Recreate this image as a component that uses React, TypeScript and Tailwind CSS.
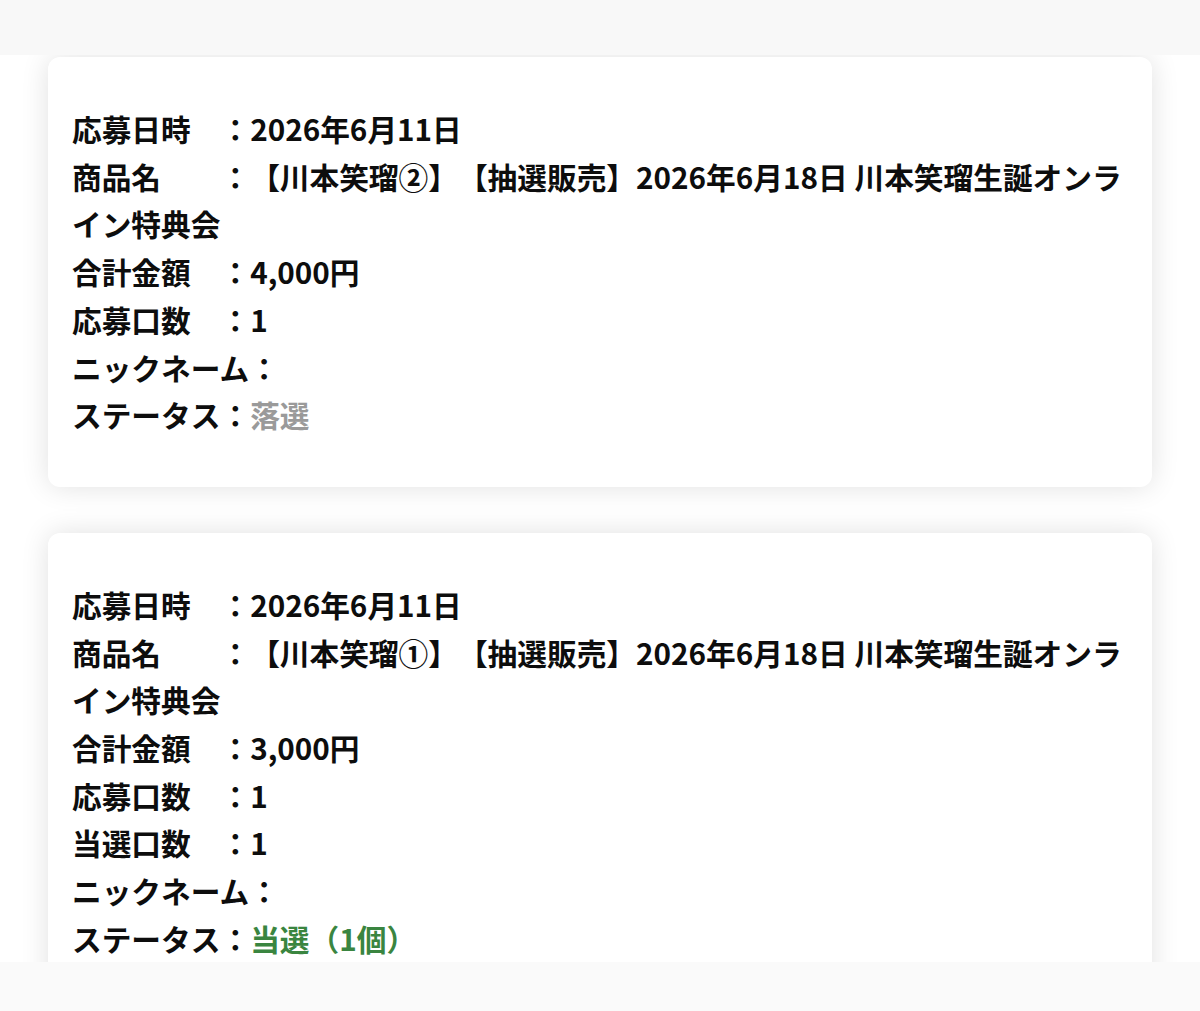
import React from "react";

interface Row {
  label: string;
  value: string;
  tone?: "lost" | "won";
}

const entries: Row[][] = [
  [
    { label: "応募日時　：", value: "2026年6月11日" },
    {
      label: "商品名　　：",
      value: "【川本笑瑠②】【抽選販売】2026年6月18日 川本笑瑠生誕オンライン特典会",
    },
    { label: "合計金額　：", value: "4,000円" },
    { label: "応募口数　：", value: "1" },
    { label: "ニックネーム：", value: "" },
    { label: "ステータス：", value: "落選", tone: "lost" },
  ],
  [
    { label: "応募日時　：", value: "2026年6月11日" },
    {
      label: "商品名　　：",
      value: "【川本笑瑠①】【抽選販売】2026年6月18日 川本笑瑠生誕オンライン特典会",
    },
    { label: "合計金額　：", value: "3,000円" },
    { label: "応募口数　：", value: "1" },
    { label: "当選口数　：", value: "1" },
    { label: "ニックネーム：", value: "" },
    { label: "ステータス：", value: "当選（1個）", tone: "won" },
  ],
];

function EntryCard({ rows }: { rows: Row[] }) {
  return (
    <div className="rounded-[12px] bg-white px-6 pt-[48px] pb-[48px] shadow-[0_0_28px_rgba(0,0,0,0.12)]">
      {rows.map((row, i) => (
        <p
          key={i}
          className="text-[29.7px] leading-[47.7px] font-bold text-[#0d0d0d] [text-spacing-trim:space-all]"
        >
          {row.label}
          <span
            className={
              row.tone === "lost"
                ? "text-[#9a9a9a]"
                : row.tone === "won"
                ? "text-[#3a8540]"
                : ""
            }
          >
            {row.value}
          </span>
        </p>
      ))}
    </div>
  );
}

export default function App() {
  return (
    <div
      className="min-h-screen bg-white"
      style={{ fontFamily: '"Noto Sans CJK JP", "Noto Sans", sans-serif' }}
    >
      {/* Top bar */}
      <div className="relative z-10 h-[55px] bg-[#f8f8f8]" />

      {/* Entry list */}
      <div className="flex flex-col gap-[46px] px-[48px] pt-[2px] pb-[80px]">
        {entries.map((rows, i) => (
          <EntryCard key={i} rows={rows} />
        ))}
      </div>

      {/* Bottom bar */}
      <div className="fixed bottom-0 left-0 right-0 z-10 h-[49px] bg-[#fafafa]" />
    </div>
  );
}
